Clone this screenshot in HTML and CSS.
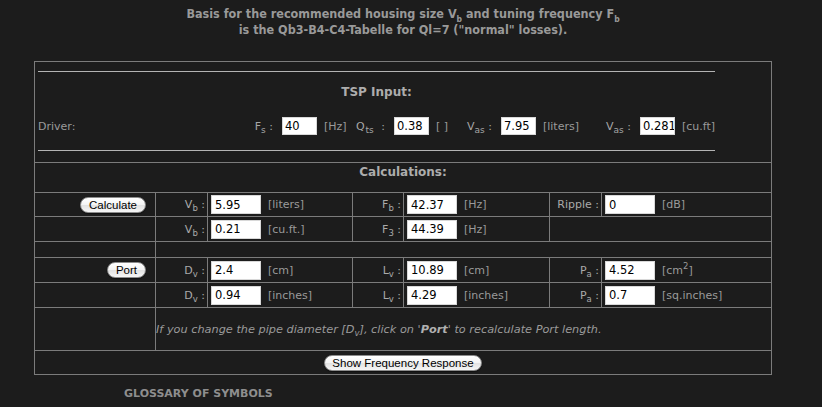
FILE: index.html
```html
<!DOCTYPE html>
<html lang="en">
<head>
  <meta charset="UTF-8">
  <title>Bass Reflex Calculator</title>
  <link rel="stylesheet" href="styles.css">
</head>
<body>
  <div class="page">
    <!-- Note about the alignment table -->
    <p class="basis">
      Basis for the recommended housing size V<sub>b</sub> and tuning frequency F<sub>b</sub><br>
      is the Qb3-B4-C4-Tabelle for Ql=7 ("normal" losses).
    </p>

    <div class="calc">
      <!-- TSP input block -->
      <div class="cell span-all tsp">
        <div class="tsp-inner">
          <div class="rule first"></div>
          <div class="heading">TSP Input:</div>
          <div class="driver-row">
            <span>Driver:</span>
            <span class="tsp-fields">
              <span class="tsp-label">F<sub>s</sub> :</span>
              <input class="tsp-input" type="text" value="40">
              <span class="tsp-unit hz">[Hz]</span>
              <span class="tsp-label">Q<sub class="wide-sub">ts</sub> :</span>
              <input class="tsp-input" type="text" value="0.38">
              <span class="tsp-unit empty">[ ]</span>
              <span class="tsp-label">V<sub>as</sub> :</span>
              <input class="tsp-input" type="text" value="7.95">
              <span class="tsp-unit liters">[liters]</span>
              <span class="tsp-label">V<sub>as</sub> :</span>
              <input class="tsp-input" type="text" value="0.281">
              <span class="tsp-unit">[cu.ft]</span>
            </span>
          </div>
          <div class="rule last"></div>
        </div>
      </div>

      <div class="cell span-all heading calc-head">Calculations:</div>

      <!-- Box volume and tuning -->
      <div class="cell btn-cell"><button class="aqua">Calculate</button></div>
      <div class="cell lbl"><span>V<sub>b</sub> :</span></div>
      <div class="cell val"><input type="text" value="5.95"><span class="unit">[liters]</span></div>
      <div class="cell lbl"><span>F<sub>b</sub> :</span></div>
      <div class="cell val"><input type="text" value="42.37"><span class="unit">[Hz]</span></div>
      <div class="cell lbl"><span>Ripple :</span></div>
      <div class="cell val"><input type="text" value="0"><span class="unit">[dB]</span></div>

      <div class="cell"></div>
      <div class="cell lbl"><span>V<sub>b</sub> :</span></div>
      <div class="cell val"><input type="text" value="0.21"><span class="unit">[cu.ft.]</span></div>
      <div class="cell lbl"><span>F<sub>3</sub> :</span></div>
      <div class="cell val"><input type="text" value="44.39"><span class="unit">[Hz]</span></div>
      <div class="cell span-2"></div>

      <div class="cell"></div>
      <div class="cell span-6"></div>

      <!-- Port dimensions -->
      <div class="cell btn-cell"><button class="aqua">Port</button></div>
      <div class="cell lbl"><span>D<sub>v</sub> :</span></div>
      <div class="cell val"><input type="text" value="2.4"><span class="unit">[cm]</span></div>
      <div class="cell lbl"><span>L<sub>v</sub> :</span></div>
      <div class="cell val"><input type="text" value="10.89"><span class="unit">[cm]</span></div>
      <div class="cell lbl"><span>P<sub>a</sub> :</span></div>
      <div class="cell val"><input type="text" value="4.52"><span class="unit">[cm<sup>2</sup>]</span></div>

      <div class="cell"></div>
      <div class="cell lbl"><span>D<sub>v</sub> :</span></div>
      <div class="cell val"><input type="text" value="0.94"><span class="unit">[inches]</span></div>
      <div class="cell lbl"><span>L<sub>v</sub> :</span></div>
      <div class="cell val"><input type="text" value="4.29"><span class="unit">[inches]</span></div>
      <div class="cell lbl"><span>P<sub>a</sub> :</span></div>
      <div class="cell val"><input type="text" value="0.7"><span class="unit">[sq.inches]</span></div>

      <div class="cell"></div>
      <div class="cell span-6 note"><span>If you change the pipe diameter [D<sub>v</sub>], click on '<b>Port</b>' to recalculate Port length.</span></div>

      <div class="cell span-all center"><button class="aqua wide">Show Frequency Response</button></div>
    </div>

    <h3 class="glossary">GLOSSARY OF SYMBOLS</h3>
  </div>
</body>
</html>
```

FILE: styles.css
```css
/* Page basics */
body {
  margin: 0;
  background-color: #1c1c1c;
  color: #9a9a9a;
  font-family: "DejaVu Sans", Verdana, sans-serif;
  font-size: 11px;
}

.page {
  width: 738px;
  padding-left: 34px;
}

sub, sup {
  font-size: 8.5px;
  line-height: 0;
}

/* Header note */
.basis {
  margin: 6px 0 23px;
  text-align: center;
  font-family: "DejaVu Sans Condensed", "DejaVu Sans", sans-serif;
  font-stretch: condensed;
  font-weight: bold;
  font-size: 12.5px;
  line-height: 16px;
  color: #999999;
}

/* Calculator grid - the gaps draw the cell lines */
.calc {
  display: grid;
  grid-template-columns: 120px 51px 144px 50px 145px 51px 169px;
  grid-template-rows: 100px 29px 23px 24px 15px 24px 24px 42px 23px;
  gap: 1px;
  padding: 1px;
  background-color: #7b7b7b;
}

.cell {
  background-color: #1c1c1c;
  display: flex;
  align-items: center;
  min-width: 0;
}

.span-all { grid-column: 1 / -1; }
.span-6 { grid-column: 2 / -1; }
.span-2 { grid-column: 6 / -1; }

.center { justify-content: center; }

.heading {
  font-weight: bold;
  font-size: 12px;
  line-height: 16px;
  color: #adadad;
  text-align: center;
}

/* TSP input block */
.tsp {
  align-items: flex-start;
  padding-left: 3px;
}

.tsp-inner {
  width: 677px;
  display: flex;
  flex-direction: column;
}

.rule {
  border-top: 1px solid #b4b4b4;
}
.rule.first { margin-top: 9px; }
.rule.last { margin-top: 15px; }

.tsp-inner .heading { margin-top: 12px; }

.driver-row {
  margin-top: 17px;
  height: 18px;
  display: flex;
  justify-content: space-between;
  align-items: center;
}

.tsp-fields {
  display: flex;
  align-items: center;
}

.tsp-label {
  margin-right: 9px;
  color: #a6a6a6;
}
.tsp-label sub { font-size: 9px; }
.tsp-label sub.wide-sub {
  margin-left: 1px;
  margin-right: 4px;
}

.tsp-input {
  width: 35px;
  height: 18px;
  padding: 0 0 0 2px;
}

.tsp-unit { margin-left: 7px; }
.tsp-unit.hz { width: 32px; }
.tsp-unit.empty { width: 31px; }
.tsp-unit.liters { width: 63px; }

.calc-head {
  justify-content: center;
  align-items: flex-start;
  padding-top: 1px;
}

/* Value rows */
.btn-cell {
  justify-content: flex-end;
  padding-right: 9px;
}

.lbl {
  justify-content: flex-end;
  padding-right: 2px;
  color: #aaaaaa;
}

.val input {
  margin-left: 3px;
  width: 50px;
  height: 19px;
}

.unit {
  margin-left: 7px;
}

input {
  box-sizing: border-box;
  border: 1px solid #d8d8d8;
  background: #fff;
  color: #000;
  font-family: "DejaVu Sans", sans-serif;
  font-size: 11.5px;
  padding: 0 3px;
  margin: 0;
}

.note {
  font-style: italic;
  font-size: 11.3px;
  color: #9a9a9a;
}
.note b { color: #b0b0b0; }

/* Aqua style pill buttons */
.aqua {
  font-family: "Liberation Sans", Arial, sans-serif;
  font-size: 11.5px;
  height: 16px;
  line-height: 14px;
  padding: 0 8px;
  border: 1px solid #8c8c8c;
  border-radius: 8px;
  background: linear-gradient(#ffffff, #f4f4f4 50%, #e2e2e2 51%, #f6f6f6);
  color: #000;
  box-shadow: 0 1px 1px rgba(0,0,0,0.4);
}
.aqua.wide { padding: 0 7px; }

/* Glossary heading */
.glossary {
  margin: 11px 0 0 90px;
  font-size: 11px;
  line-height: 16px;
  color: #8e8e8e;
}
```
